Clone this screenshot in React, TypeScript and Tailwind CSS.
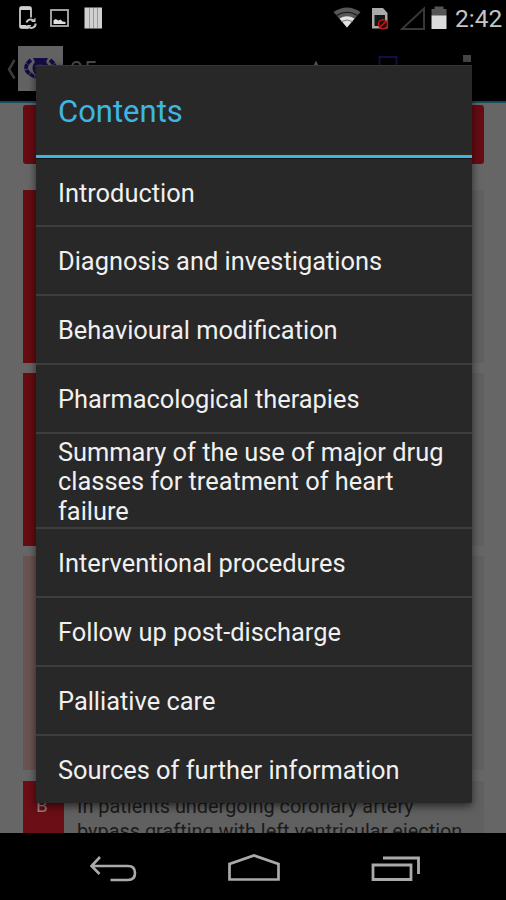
const sections = [
  { title: "Introduction", height: "h-[68px]" },
  { title: "Diagnosis and investigations", height: "h-[69px]" },
  { title: "Behavioural modification", height: "h-[69px]" },
  { title: "Pharmacological therapies", height: "h-[69px]" },
  { title: "Summary of the use of major drug classes for treatment of heart failure", height: "h-[95px]" },
  { title: "Interventional procedures", height: "h-[69px]" },
  { title: "Follow up post-discharge", height: "h-[69px]" },
  { title: "Palliative care", height: "h-[69px]" },
  { title: "Sources of further information", height: "h-[67px]" },
];

const StatusBar = () => (
  <div className="flex h-9 shrink-0 items-center justify-between bg-black">
    <svg width="110" height="36" viewBox="0 0 110 36" fill="none">
      <rect x="20" y="7" width="11" height="21" rx="2" stroke="#b4b4b4" strokeWidth="2" />
      <path d="M20 8.500h11M20 26.500h8" stroke="#d0d0d0" strokeWidth="3" />
      <path d="M26 17.500h7v3h4v9h-8.500v-4H26z" fill="#000" />
      <path d="M26.500 22.500a4 4 0 0 1 6.500-2M35.500 23.500a4 4 0 0 1-6.500 3.500" stroke="#c4c4c4" strokeWidth="2" />
      <path d="M31 22h4.500v-4.500zM31.500 25h-4v4.500z" fill="#c4c4c4" />
      <rect x="51" y="10" width="17" height="16" stroke="#b0b0b0" strokeWidth="1.800" />
      <path d="M53.500 24v-3.500l2-1.500 3 1.500 2-1 2 2 3 .5v2z" fill="#e0e0e0" />
      <rect x="84.500" y="7.500" width="17.500" height="21" fill="#d0d0d0" />
      <path d="M89.500 8v20M93.500 8v20M97.500 8v20" stroke="#9a9a9a" strokeWidth="1" />
    </svg>
    <div className="flex items-center">
      <svg width="122" height="36" viewBox="328 0 122 36" fill="none">
        <path d="M333.500 12q13.500-9 27 0L347 27.500z" fill="#575757" />
        <path d="M336.500 15.500q10.500-6.500 21 0" stroke="#161616" strokeWidth="1.200" />
        <path d="M339.500 18.500q7.500-4.500 15 0L347 27.500z" fill="#e3e3e3" />
        <path d="M341.500 21.500q5.500-3 11 0" stroke="#777" strokeWidth="1" />
        <path d="M372 8h11l4.500 5v15.500H372z" fill="#aaa" />
        <rect x="374.500" y="15" width="10.500" height="11" fill="#151515" />
        <circle cx="383" cy="24.300" r="4.500" fill="#260606" stroke="#c01b1b" strokeWidth="1.500" />
        <path d="M379.800 27.500l6.400-6.400" stroke="#c01b1b" strokeWidth="1.500" />
        <path d="M402 29h22V8.500z" stroke="#383838" strokeWidth="2" />
        <path d="M431.500 9h3V6.500h9V9h3v7h-15z" fill="#555" />
        <rect x="431.500" y="15.500" width="15" height="13.500" fill="#dcdcdc" />
      </svg>
      <span className="w-[56px] pl-[5px] pt-[2px] text-[24.500px] leading-9 text-[#c4c4c4]">2:42</span>
    </div>
  </div>
);

const ActionBar = () => (
  <div className="flex h-[67px] shrink-0 items-center border-b-2 border-[#164a5c] bg-black">
    <svg className="ml-[6px]" width="12" height="24" viewBox="0 0 12 24" fill="none">
      <path d="M8.500 3L3 12.500l5.500 9" stroke="#3b3b3b" strokeWidth="2.500" />
    </svg>
    <svg width="45" height="45" viewBox="0 0 45 45" fill="none">
      <rect width="45" height="45" fill="#626262" />
      <path d="M15 12h15l-2 4v5l-5 7-6-7v-5z" fill="#130d45" />
      <circle cx="22.500" cy="22" r="8" fill="#130d45" />
      <path d="M17 21q5-4 11 0M17 25q5-4 11 0" stroke="#4a4861" />
      <path d="M13 14q-12 10 5 17M32 14q12 10-5 17" stroke="#130d45" strokeWidth="4" strokeDasharray="5 .7" />
      <path d="M13 17q-4 7 4 12" stroke="#626262" strokeWidth="1" />
    </svg>
    <span className="ml-[7px] w-[237px] pt-[3px] text-[24px] text-[#4b4b4b]">95</span>
    <svg width="190" height="45" viewBox="0 0 190 45" fill="none">
      <path d="M9 14.500l-6 12h12z" fill="#585858" />
      <rect x="72.500" y="11" width="17" height="23" stroke="#16114a" strokeWidth="1.800" />
      <path d="M156 9h8v7h-8zM156 20h8v7h-8zM156 31h8v7h-8z" fill="#454545" />
    </svg>
  </div>
);

const Page = () => (
  <main className="flex h-[730px] shrink-0 flex-col overflow-hidden bg-[#666] pl-[23px] pr-[22px] pt-[2px]">
    <div className="h-[59px] shrink-0 rounded-[3px] bg-[#670c13]" />
    <div className="mt-[26px] flex h-[173px] shrink-0 bg-[#606060]">
      <div className="w-10 bg-[#650c12]" />
    </div>
    <div className="mt-[10px] flex h-[173px] shrink-0 bg-[#606060]">
      <div className="w-10 bg-[#650c12]" />
    </div>
    <div className="mt-[10px] flex h-[214px] shrink-0 bg-[#606060]">
      <div className="w-10 bg-[#6a5452]" />
    </div>
    <div className="mt-[11px] flex h-[120px] shrink-0 bg-[#606060]">
      <div className="w-[41px] bg-[#6b0e15] pt-[11px] text-center text-[19px] text-[#958080]">
        <span className="-ml-[3px]">B</span>
      </div>
      <p className="pl-[13px] pt-[13px] text-[19.900px] leading-[25px] whitespace-nowrap text-[#1b1b1b]">
        In patients undergoing coronary artery
        <br />
        bypass grafting with left ventricular ejection
      </p>
    </div>
  </main>
);

const NavBar = () => (
  <nav className="flex h-[67px] shrink-0 items-center bg-black">
    <svg width="506" height="67" viewBox="0 833 506 67" fill="none" stroke="#aaa">
      <path d="M100 857l-8.500 9 8 8M92.500 866h35.500q7 0 7 7t-7 7h-17.500" strokeWidth="2.600" />
      <path d="M229.500 879.500v-15.500l24.500-8.500 24.500 8.500v15.500z" strokeWidth="2.700" />
      <path d="M373 865h38v14.500h-38zM383 858h35.500v16" strokeWidth="2.800" />
    </svg>
  </nav>
);

const ContentsDialog = () => (
  <div
    role="dialog"
    className="absolute left-[36px] top-[65px] w-[435.500px] rounded-[2px] bg-[#282828] shadow-[0_3px_9px_rgba(0,0,0,0.6)]"
  >
    <h2 className="flex h-[90px] items-center border-t border-[#363636] pl-[22px] pt-[3px] text-[31px] text-[#3fb5e3]">
      Contents
    </h2>
    <div className="h-[4px] border-b border-[#141414] bg-[#42b3df]" />
    <ul>
      {sections.map((section) => (
        <li
          key={section.title}
          className={`flex items-center border-b-2 border-[#3e3e3e] pt-[3px] pl-[22px] pr-[20px] text-[25.400px] leading-[29.300px] text-[#f0f0f0] last:border-b-0 ${section.height}`}
        >
          {section.title}
        </li>
      ))}
    </ul>
  </div>
);

export default function App() {
  return (
    <div className="relative flex h-[900px] w-[506px] flex-col overflow-hidden bg-black font-['Roboto',sans-serif]">
      <StatusBar />
      <ActionBar />
      <Page />
      <NavBar />
      <ContentsDialog />
    </div>
  );
}
